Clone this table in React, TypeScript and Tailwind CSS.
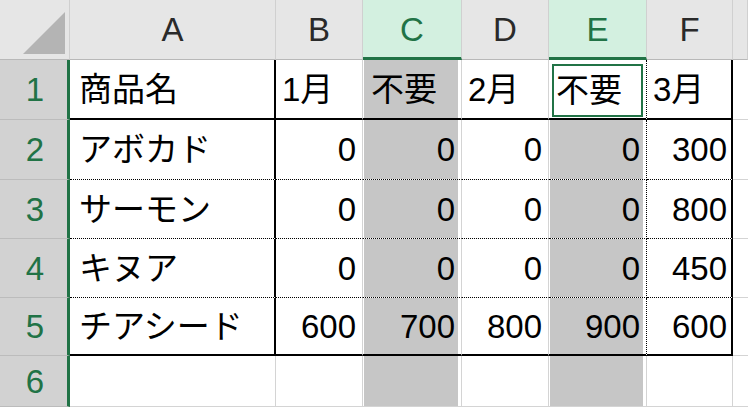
import React from 'react';
import clsx from 'clsx';

type Val = string | number;

const COLS = ['A', 'B', 'C', 'D', 'E', 'F', ''];
const SELECTED = [false, false, true, false, true, false, false];

const ROWS: Val[][] = [
  ['商品名', '1月', '不要', '2月', '不要', '3月', ''],
  ['アボカド', 0, 0, 0, 0, 300, ''],
  ['サーモン', 0, 0, 0, 0, 800, ''],
  ['キヌア', 0, 0, 0, 0, 450, ''],
  ['チアシード', 600, 700, 800, 900, 600, ''],
  ['', '', '', '', '', '', ''],
];

// right edge of each column inside the table (rows 1-5)
const RIGHT_TABLE = [
  'border-r-2 border-r-black',
  'border-r border-r-[#d4d4d4]',
  'border-r border-r-[#d4d4d4]',
  'border-r border-r-[#d4d4d4]',
  'border-r border-r-black [border-right-style:dotted]!',
  'border-r-2 border-r-black',
  '',
];

const BOTTOM_TABLE = [
  'border-b-2 border-b-black',
  'border-b border-b-black [border-bottom-style:dotted]!',
  'border-b border-b-black [border-bottom-style:dotted]!',
  'border-b border-b-black [border-bottom-style:dotted]!',
  'border-b-2 border-b-black',
  'border-b border-b-[#d4d4d4]',
];

const PAD_LEFT = ['pl-[9px]', 'pl-[6px]', 'pl-[7px]', 'pl-[6px]', 'pl-[7px]', 'pl-[6px]', ''];
const PAD_RIGHT = ['pr-[6px]', 'pr-[6px]', 'pr-[3px]', 'pr-[6px]', 'pr-[3px]', 'pr-[4px]', ''];

const Cell: React.FC<{ value: Val; row: number; col: number }> = ({ value, row, col }) => {
  const right = row < 5 ? RIGHT_TABLE[col] : col < 6 ? 'border-r border-r-[#d4d4d4]' : '';
  const bottom = col < 6 ? BOTTOM_TABLE[row] : 'border-b border-b-[#d4d4d4]';
  const active = row === 0 && col === 4;
  const gray = SELECTED[col] && !active;
  const isNum = typeof value === 'number';

  return (
    <div className={clsx('flex min-w-0 bg-white', right, bottom)}>
      {active ? (
        <div className="mt-[4px] mr-[3px] mb-px ml-[3px] flex flex-1 items-center border-2 border-[#217346] pl-[2px]">
          {value}
        </div>
      ) : (
        <div
          className={clsx(
            'flex flex-1 items-center whitespace-nowrap',
            gray && 'mr-[3px] ml-px bg-[#c6c6c6]',
            isNum ? clsx('justify-end', PAD_RIGHT[col]) : PAD_LEFT[col]
          )}
        >
          {value}
        </div>
      )}
    </div>
  );
};

export default function App() {
  return (
    <div className="h-[407px] w-[748px] overflow-hidden bg-white font-['Liberation_Sans','Noto_Sans_CJK_JP',sans-serif] text-[33px] leading-none text-black">
      <div className="grid grid-cols-[70px_206px_87px_99px_87px_98px_86px_15px] grid-rows-[60px_60px_60px_59px_59px_58px_51px]">
        {/* corner */}
        <div className="flex items-center justify-center border-r border-b border-r-[#cfcfcf] border-b-[#b8b8b8] bg-[#e6e6e6]">
          <svg width="69" height="59" viewBox="0 0 69 59">
            <polygon points="23,54 65,54 65,12" fill="#b4b4b4" />
          </svg>
        </div>

        {COLS.map((c, i) =>
          SELECTED[i] ? (
            <div
              key={i}
              className="flex items-center justify-center border-r border-b-[3px] border-r-[#d0d0d0] border-b-[#217346] bg-[#d3f0e0] pt-[2px] text-[#217346]"
            >
              {c}
            </div>
          ) : (
            <div
              key={i}
              className="flex items-center justify-center border-r border-b border-r-[#d0d0d0] border-b-[#b8b8b8] bg-[#e6e6e6] text-[#2a2a2a]"
            >
              {c}
            </div>
          )
        )}

        {ROWS.map((row, r) => (
          <React.Fragment key={r}>
            <div className="flex items-center justify-center border-r-[3px] border-b border-r-[#217346] border-b-[#bcbcbc] bg-[#d2d2d2] pl-[3px] text-[#217346]">
              {r + 1}
            </div>
            {row.map((v, c) => (
              <Cell key={c} value={v} row={r} col={c} />
            ))}
          </React.Fragment>
        ))}
      </div>
    </div>
  );
}
